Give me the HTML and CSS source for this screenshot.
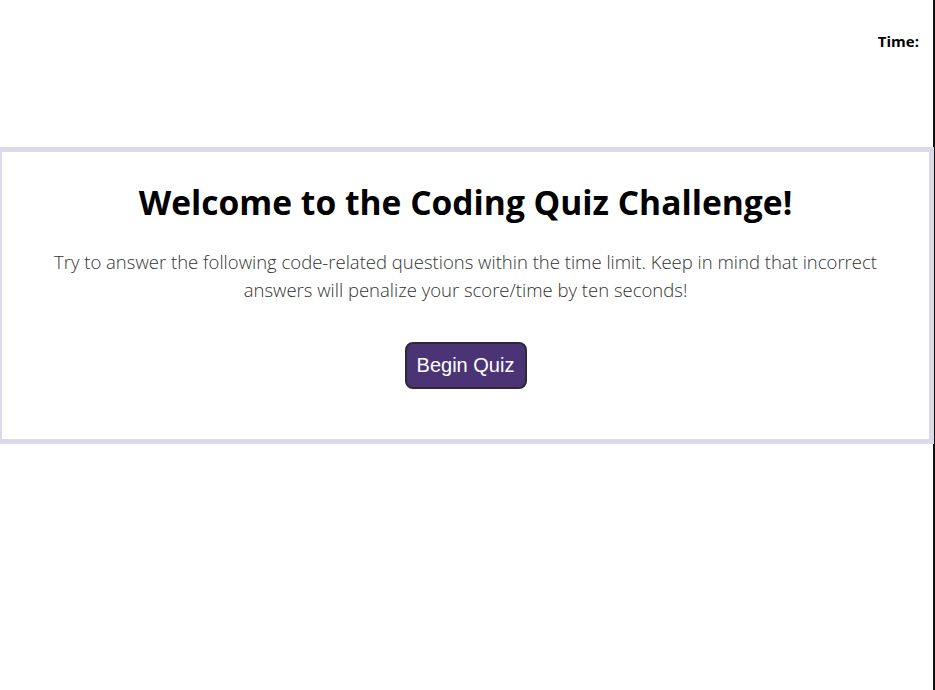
FILE: index.html
```html
<!DOCTYPE html>
<html lang="en">
<head>
<meta charset="utf-8">
<title>Coding Quiz</title>
<link rel="stylesheet" href="styles.css">
</head>
<body>
<div class="page">
  <header class="topbar">
    <span class="timer">Time:</span>
  </header>
  <main class="card">
    <h1 class="title">Welcome to the Coding Quiz Challenge!</h1>
    <p class="intro">Try to answer the following code-related questions within the time limit. Keep in mind that incorrect answers will penalize your score/time by ten seconds!</p>
    <button class="start">Begin Quiz</button>
  </main>
</div>
</body>
</html>
```

FILE: styles.css
```css
html, body {
  margin: 0;
  padding: 0;
  background: #fff;
}
.page {
  width: 933px;
  height: 690px;
  border-right: 2px solid #111;
  font-family: "Open Sans", "Noto Sans", sans-serif;
  color: #000;
}
.topbar {
  display: flex;
  justify-content: flex-end;
  height: 147px;
  box-sizing: border-box;
  padding: 31px 14px 0 0;
}
.timer {
  font-weight: 700;
  font-size: 15px;
  line-height: 20px;
}
.card {
  box-sizing: border-box;
  height: 297px;
  border: 5px solid #dcd9ea;
  border-left-width: 2px;
  border-right-width: 5px;
  width: 934px;
  display: flex;
  flex-direction: column;
  align-items: center;
  padding-top: 28px;
}
.title {
  margin: 0;
  font-size: 33.6px;
  font-weight: 700;
  line-height: 44px;
}
.intro {
  margin: 24px 0 0;
  font-size: 18.5px;
  font-weight: 300;
  line-height: 28px;
  color: #333;
  text-align: center;
  max-width: 870px;
}
.start {
  margin-top: 38px;
  font-family: "Liberation Sans", Arial, sans-serif;
  font-size: 20px;
  color: #fff;
  background: #4b3475;
  border: 2px solid #2e2838;
  border-radius: 8px;
  width: 122px;
  height: 47px;
  padding: 0;
}
```
